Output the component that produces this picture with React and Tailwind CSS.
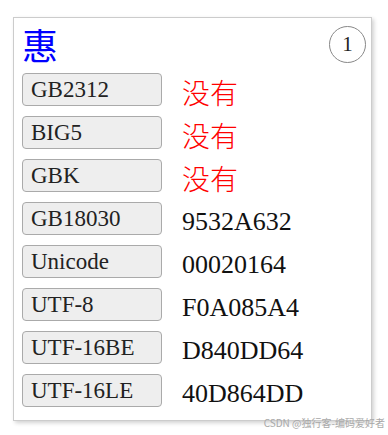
import React from "react";

const rows = [
  { name: "GB2312", value: "没有", missing: true },
  { name: "BIG5", value: "没有", missing: true },
  { name: "GBK", value: "没有", missing: true },
  { name: "GB18030", value: "9532A632" },
  { name: "Unicode", value: "00020164" },
  { name: "UTF-8", value: "F0A085A4" },
  { name: "UTF-16BE", value: "D840DD64" },
  { name: "UTF-16LE", value: "40D864DD" },
];

const serif = "font-['Liberation_Serif','Noto_Sans_CJK_SC',serif]";

export default function App() {
  return (
    <div className="relative w-[388px] h-[435px] bg-white pt-[17px] pl-[13px] overflow-hidden">
      <div className="w-[359px] border border-[#cccccc] bg-white shadow-[2px_2px_4px_rgba(0,0,0,0.18)] pl-[8px] pr-[5px] pt-[8px] pb-[13px]">
        {/* header */}
        <div className="flex items-center justify-between h-[37px] mb-[10px]">
          <span className="text-[36px] leading-[37px] text-[#0000ff] font-['Noto_Sans_CJK_SC',sans-serif]">惠</span>
          <div className={`w-[37px] h-[37px] rounded-full border border-[#888888] flex items-center justify-center text-[21px] text-[#222] ${serif}`}>
            1
          </div>
        </div>

        <div className="flex flex-col gap-[10px]">
          {rows.map((r) => (
            <div key={r.name} className="flex items-center h-[33px]">
              <div className={`w-[140px] h-[33px] shrink-0 bg-[#eeeeee] border border-[#aaaaaa] rounded-[4px] pl-[8px] flex items-center text-[23px] leading-none text-[#222] ${serif}`}>
                {r.name}
              </div>
              {r.missing ? (
                <span className="ml-[20px] mt-[4px] text-[28px] leading-none text-[#ff0000] font-['Noto_Sans_CJK_SC',sans-serif] font-light">
                  {r.value}
                </span>
              ) : (
                <span className={`ml-[20px] mt-[6px] text-[26px] leading-none text-[#111] ${serif}`}>
                  {r.value}
                </span>
              )}
            </div>
          ))}
        </div>
      </div>

      <span className="absolute right-[3px] bottom-[7px] text-[10px] leading-none text-[#a8a8a8] font-['Noto_Sans_CJK_SC',sans-serif]">
        CSDN @独行客-编码爱好者
      </span>
    </div>
  );
}
